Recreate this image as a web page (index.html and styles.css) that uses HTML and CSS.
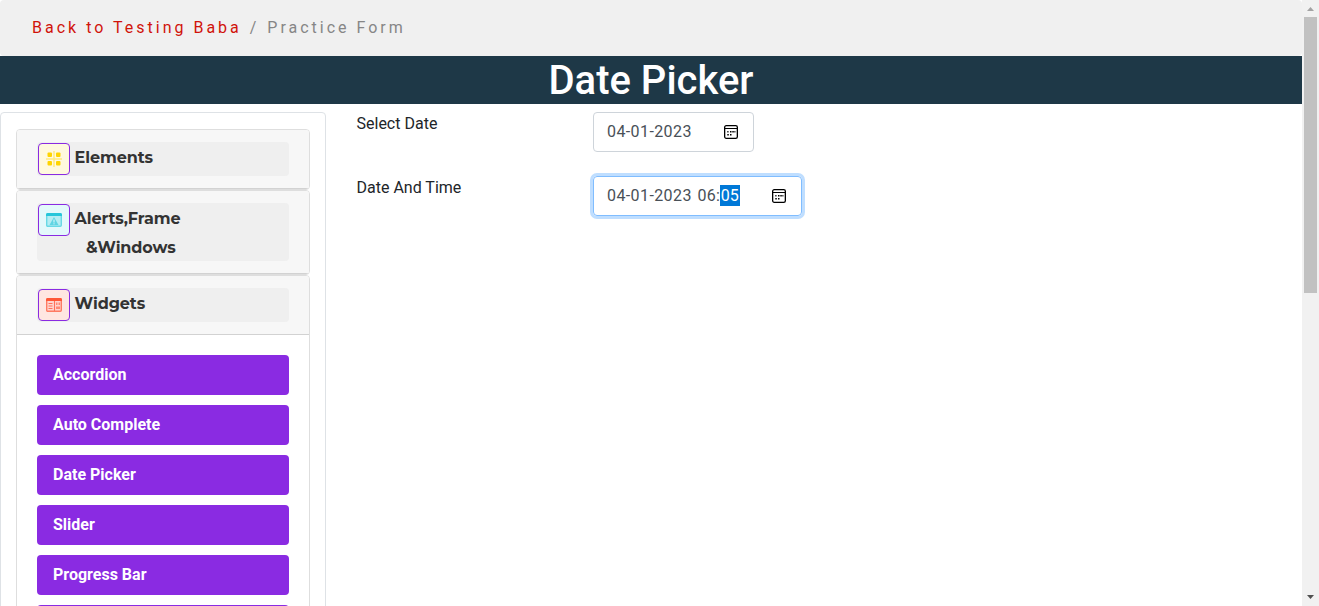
FILE: index.html
```html
<!DOCTYPE html>
<html lang="en">
<head>
<meta charset="utf-8">
<title>Date Picker</title>
<link rel="stylesheet" href="styles.css">
</head>
<body>
<div class="window">
  <div class="page">
    <nav class="breadcrumb"><a class="back">Back to Testing Baba</a> <span class="slash">/</span> <span class="current">Practice Form</span></nav>
    <h1 class="title">Date Picker</h1>
    <main class="content">
      <aside class="sidebar">
        <section class="card">
          <div class="card-header"><div class="toggle">
            <span class="icon icon-yellow"><svg width="16" height="16" viewBox="0 0 16 16"><path d="M7.25 0h1.5v16h-1.5zM0 7.25h16v1.5H0z" fill="#ffe97f"/><g fill="#ffd400"><rect x="1.5" y="1.5" width="4.5" height="4.5" rx="1"/><rect x="10" y="1.5" width="4.5" height="4.5" rx="1"/><rect x="1.5" y="10" width="4.5" height="4.5" rx="1"/><rect x="10" y="10" width="4.5" height="4.5" rx="1"/></g></svg></span>
            <span class="label">Elements</span>
          </div></div>
        </section>
        <section class="card">
          <div class="card-header"><div class="toggle tall">
            <span class="icon icon-cyan"><svg width="16" height="16" viewBox="0 0 16 16"><rect x=".7" y="1.7" width="14.6" height="12.6" rx="1" fill="#b5edf3" stroke="#68d9e5" stroke-width="1.4"/><path d="M0 4V2.5Q0 1 1.5 1h13Q16 1 16 2.5V4z" fill="#26c6da"/><path d="M8 5l4.5 8h-9z" fill="#5fd5e3"/><path d="M8 7.5v3M8 11.3v1" stroke="#e3f9fb"/></svg></span>
            <span class="label alerts">Alerts,Frame<br><span class="second-line">&amp;Windows</span></span>
          </div></div>
        </section>
        <section class="card open">
          <div class="card-header"><div class="toggle">
            <span class="icon icon-red"><svg width="16" height="16" viewBox="0 0 16 16"><rect x=".7" y="1.7" width="14.6" height="12.6" rx="1" fill="#ffd5ce" stroke="#ff7b63" stroke-width="1.4"/><path d="M0 4V2.5Q0 1 1.5 1h13Q16 1 16 2.5V4z" fill="#ff5737"/><path d="M8.5 4v10M2.5 6.5h4M2.5 9h4M2.5 11.5h4" stroke="#ff705a" stroke-width="1.1"/><path d="M10 5.5h1.5V8H10zM12.5 5.5H14V8h-1.5zM10 9.5h4V12h-4z" fill="#ff8874"/></svg></span>
            <span class="label">Widgets</span>
          </div></div>
          <ul class="menu">
            <li>Accordion</li>
            <li>Auto Complete</li>
            <li>Date Picker</li>
            <li>Slider</li>
            <li>Progress Bar</li>
            <li></li>
          </ul>
        </section>
      </aside>
      <form class="form">
        <div class="row">
          <span class="field-label">Select Date</span>
          <div class="field date"><span class="date-part">04-01-2023</span><svg class="calendar" width="14" height="14" viewBox="0 0 14 14"><rect x=".65" y=".65" width="12.7" height="12.7" rx="1.6" fill="none" stroke="#000" stroke-width="1.3"/><path d="M1 3.5h12" stroke="#000"/><path d="M6 6h1.5v1.5H6zM8.3 6h1.5v1.5H8.3zM10.4 6h1v1.5h-1zM3.3 6h1.2v1.5H3.3zM3.3 9h1.5v1.5H3.3zM6 9h1.5v1.5H6z"/></svg></div>
        </div>
        <div class="row">
          <span class="field-label">Date And Time</span>
          <div class="field datetime"><span class="date-part">04-01-2023</span><span class="hour">06:</span><span class="selected">05</span><svg class="calendar" width="14" height="14" viewBox="0 0 14 14"><rect x=".65" y=".65" width="12.7" height="12.7" rx="1.6" fill="none" stroke="#000" stroke-width="1.3"/><path d="M1 3.5h12" stroke="#000"/><path d="M6 6h1.5v1.5H6zM8.3 6h1.5v1.5H8.3zM10.4 6h1v1.5h-1zM3.3 6h1.2v1.5H3.3zM3.3 9h1.5v1.5H3.3zM6 9h1.5v1.5H6z"/></svg></div>
        </div>
      </form>
    </main>
  </div>
  <div class="scrollbar">
    <svg class="arrow" width="17" height="17"><path d="M5 11l3.5-4 3.5 4z" fill="#a3a3a3"/></svg>
    <div class="thumb"></div>
    <svg class="arrow" width="17" height="17"><path d="M5 6h7l-3.5 4z" fill="#505050"/></svg>
  </div>
</div>
</body>
</html>
```

FILE: styles.css
```css
* { box-sizing: border-box; }
body {
  margin: 0;
  overflow: hidden;
  background: #fff;
  color: #212529;
  font: 16px/24px Roboto, sans-serif;
}
.window { display: flex; height: 606px; overflow: hidden; }
.page { width: 1302px; overflow: hidden; }
.breadcrumb {
  height: 56px;
  padding: 16px 32px;
  border-radius: 4px;
  background: #f0f0f0;
  color: #868686;
  letter-spacing: 3px;
}
.back { color: #d0130a; }
.slash { margin: 0 1px; }
.title {
  height: 48px;
  margin: 0 0 8px;
  padding-top: 1px;
  background: #1e3847;
  color: #fff;
  font-size: 40px;
  line-height: 48px;
  font-weight: 500;
  text-align: center;
}
.content { display: flex; align-items: flex-start; }
.sidebar {
  width: 326px;
  height: 900px;
  padding: 16px 15px;
  border: 1px solid #dee2e6;
  border-radius: 4px;
}
.card {
  border: 1px solid #dedede;
  border-radius: 4px;
  overflow: hidden;
}
.card-header {
  padding: 12px 20px;
  border-bottom: 1px solid #d2d2d2;
  background: #f7f7f7;
}
.toggle {
  display: flex;
  height: 34px;
  padding: 1px;
  border-radius: 4px;
  background: #efefef;
}
.tall { height: 58px; }
.icon {
  display: flex;
  align-items: center;
  justify-content: center;
  width: 32px;
  height: 32px;
  border: 1px solid #8a2be2;
  border-radius: 4px;
}
.icon-yellow { background: #fff9de; }
.icon-cyan { background: #e3f9fb; }
.icon-red { background: #ffe6e1; }
.label {
  margin-left: 4.6px;
  color: #333;
  font: 700 16px/29px Montserrat, Inter, sans-serif;
  letter-spacing: -.1px;
}
.second-line { margin-left: 11.4px; }
.menu {
  margin: 0;
  padding: 20px;
  list-style: none;
}
.menu li {
  height: 40px;
  margin-bottom: 10px;
  padding: 8px 16px;
  border-radius: 4px;
  background: #8a2be2;
  color: #fff;
  font-weight: 700;
}
.form { padding-left: 30.5px; }
.row { display: flex; height: 64px; }
.field-label { width: 236.5px; }
.field {
  display: flex;
  align-items: center;
  height: 40px;
  padding: 0 15px 0 13px;
  border: 1px solid #ced4da;
  border-radius: 4px;
  color: #495057;
}
.date { width: 161px; }
.datetime {
  width: 209px;
  border-color: #80bdff;
  box-shadow: 0 0 0 3px #bfdeff;
}
.date-part { letter-spacing: .4px; }
.hour { width: 22.3px; margin-left: 5.7px; letter-spacing: .3px; }
.selected {
  width: 20px;
  height: 21px;
  margin-bottom: 1px;
  background: #0078d7;
  color: #fff;
  line-height: 21px;
  text-align: center;
}
.calendar { margin-left: auto; }
.scrollbar {
  display: flex;
  flex-direction: column;
  width: 17px;
  height: 606px;
  background: #f1f1f1;
}
.thumb {
  width: 13px;
  height: 276px;
  margin: 0 2px auto;
  background: #c1c1c1;
}
.arrow { flex: none; }
```
